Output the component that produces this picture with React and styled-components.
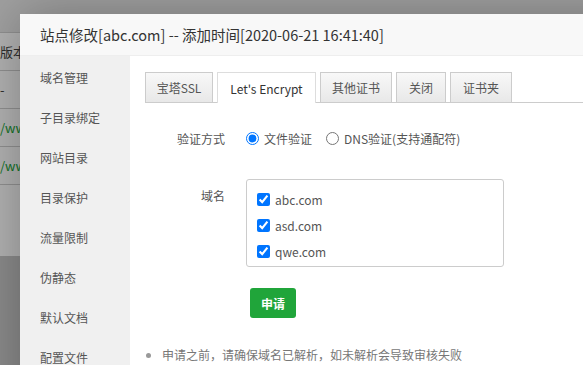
import styled, { createGlobalStyle } from "styled-components";

const GlobalStyle = createGlobalStyle`
  html, body {
    margin: 0;
    padding: 0;
    width: 583px;
    height: 365px;
    overflow: hidden;
    font-family: "Noto Sans CJK SC", "Noto Sans", sans-serif;
  }
`;

const Page = styled.div`
  position: relative;
  width: 583px;
  height: 365px;
  background: #c8c8c8;
  overflow: hidden;
`;

const PageTop = styled.div`
  height: 32px;
  background: #e6e6e6;
  border-bottom: 1px solid #cfcfcf;
`;

const BgTable = styled.div`
  background: #ffffff;
  height: 223px;
`;

const BgRow = styled.div`
  height: 37px;
  border-bottom: 1px solid #cfcfcf;
  display: flex;
  align-items: center;
  font-size: 13px;
  color: ${(p) => (p.$link ? "#20a53a" : "#444")};
  white-space: nowrap;
`;

const Overlay = styled.div`
  position: absolute;
  inset: 0;
  background: rgba(0, 0, 0, 0.3);
`;

const Modal = styled.div`
  position: absolute;
  top: 14px;
  left: 20px;
  width: 720px;
  height: 420px;
  background: #fff;
  display: flex;
  flex-direction: column;
  box-shadow: 1px 1px 50px rgba(0, 0, 0, 0.3);
`;

const TitleBar = styled.div`
  height: 41px;
  flex-shrink: 0;
  background: #f8f8f8;
  border-bottom: 1px solid #eee;
  display: flex;
  align-items: center;
  padding-left: 20px;
  font-size: 14.5px;
  color: #333;
`;

const Body = styled.div`
  flex: 1;
  display: flex;
`;

const Sidebar = styled.div`
  width: 110px;
  flex-shrink: 0;
  background: #f0f0f0;
  display: flex;
  flex-direction: column;
  padding-top: 2px;
`;

const NavItem = styled.div`
  height: 40px;
  line-height: 40px;
  padding-left: 20px;
  font-size: 12px;
  color: #555;
`;

const Content = styled.div`
  flex: 1;
  padding: 15px 0 0 15px;
  display: flex;
  flex-direction: column;
`;

const TabBar = styled.div`
  display: flex;
  gap: 4px;
  border-bottom: 1px solid #ccc;
  height: 31px;
  align-items: flex-end;
`;

const Tab = styled.div`
  width: ${(p) => p.$w}px;
  box-sizing: border-box;
  display: flex;
  align-items: center;
  justify-content: center;
  font-size: 12px;
  color: ${(p) => (p.$active ? "#333" : "#555")};
  border: 1px solid ${(p) => (p.$active ? "#ddd" : "#ccc")};
  border-bottom: none;
  margin-bottom: ${(p) => (p.$active ? "-1px" : "0")};
  height: ${(p) => (p.$active ? "31px" : "30px")};
  background: ${(p) =>
    p.$active ? "#fff" : "linear-gradient(#f8f8f8, #e8e8e8)"};
`;

const Form = styled.div`
  display: flex;
  flex-direction: column;
  padding-top: 27px;
`;

const Row = styled.div`
  display: flex;
  align-items: ${(p) => p.$align || "center"};
  margin-bottom: ${(p) => p.$mb || 0}px;
`;

const Label = styled.div`
  width: 80px;
  text-align: right;
  padding-right: 21px;
  font-size: 12px;
  color: #555;
  flex-shrink: 0;
  padding-top: ${(p) => p.$pt || 0}px;
`;

const RadioLabel = styled.label`
  display: flex;
  align-items: center;
  font-size: 12px;
  color: #555;
  margin-right: 14px;

  input {
    margin: 0 5px 0 0;
    width: 13px;
    height: 13px;
  }
`;

const DomainBox = styled.div`
  width: 258px;
  height: 88px;
  border: 1px solid #ccc;
  border-radius: 3px;
  box-sizing: border-box;
  padding: 12px 0 0 10px;
  display: flex;
  flex-direction: column;
  gap: 11px;
`;

const CheckItem = styled.label`
  display: flex;
  align-items: center;
  font-size: 12px;
  color: #555;
  height: 15px;

  input {
    margin: 0 5px 0 0;
    width: 13px;
    height: 13px;
  }
`;

const SubmitButton = styled.button`
  margin-left: 105px;
  width: 46px;
  height: 30px;
  border: none;
  border-radius: 3px;
  background: #20a53a;
  color: #fff;
  font-size: 12px;
  font-weight: bold;
  font-family: inherit;
  padding: 0;
`;

const Notes = styled.ul`
  margin: 28px 0 0 0;
  padding-left: 17px;
  font-size: 12px;
  color: #777;

  li::marker {
    color: #999;
  }
`;

const tabs = [
  { name: "宝塔SSL", w: 68 },
  { name: "Let's Encrypt", w: 99, active: true },
  { name: "其他证书", w: 72 },
  { name: "关闭", w: 50 },
  { name: "证书夹", w: 62 },
];

export default function App() {
  return (
    <Page>
      <GlobalStyle />
      <PageTop />
      <BgTable>
        <BgRow>版本</BgRow>
        <BgRow>-</BgRow>
        <BgRow $link>/www</BgRow>
        <BgRow $link>/www</BgRow>
      </BgTable>
      <Overlay />
      <Modal>
        <TitleBar>站点修改[abc.com] -- 添加时间[2020-06-21 16:41:40]</TitleBar>
        <Body>
          <Sidebar>
            {["域名管理", "子目录绑定", "网站目录", "目录保护", "流量限制", "伪静态", "默认文档", "配置文件"].map(
              (item) => (
                <NavItem key={item}>{item}</NavItem>
              )
            )}
          </Sidebar>
          <Content>
            <TabBar>
              {tabs.map((t) => (
                <Tab key={t.name} $w={t.w} $active={t.active}>
                  {t.name}
                </Tab>
              ))}
            </TabBar>
            <Form>
              <Row $mb={32}>
                <Label>验证方式</Label>
                <RadioLabel>
                  <input type="radio" name="mode" defaultChecked />
                  文件验证
                </RadioLabel>
                <RadioLabel>
                  <input type="radio" name="mode" />
                  DNS验证(支持通配符)
                </RadioLabel>
              </Row>
              <Row $align="flex-start" $mb={21}>
                <Label $pt={8}>域名</Label>
                <DomainBox>
                  {["abc.com", "asd.com", "qwe.com"].map((d) => (
                    <CheckItem key={d}>
                      <input type="checkbox" defaultChecked />
                      {d}
                    </CheckItem>
                  ))}
                </DomainBox>
              </Row>
              <div>
                <SubmitButton>申请</SubmitButton>
              </div>
              <Notes>
                <li>申请之前，请确保域名已解析，如未解析会导致审核失败</li>
              </Notes>
            </Form>
          </Content>
        </Body>
      </Modal>
    </Page>
  );
}
